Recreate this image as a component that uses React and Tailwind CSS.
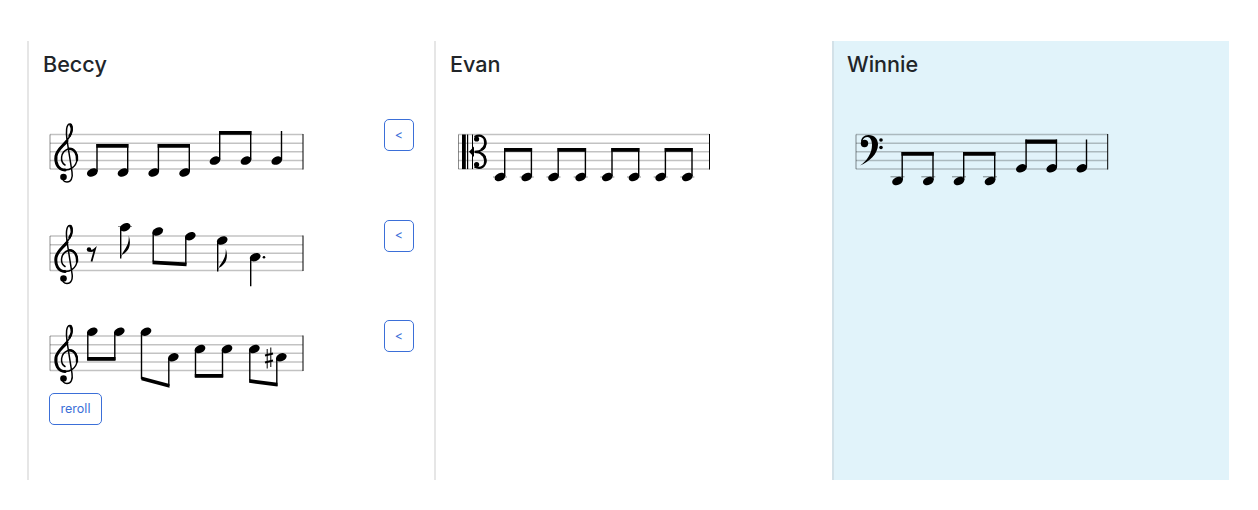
const Head = ({ x, y }) => (
  <ellipse cx={x} cy={y} rx="5.6" ry="3.9" transform={`rotate(-24 ${x} ${y})`} fill="#000" />
);

const Stem = ({ x, y1, y2 }) => <line x1={x} x2={x} y1={y1} y2={y2} stroke="#000" strokeWidth="1.4" />;

const Beam = ({ x1, y1, x2, y2, h = 3.8 }) => (
  <polygon points={`${x1},${y1} ${x2},${y2} ${x2},${y2 + h} ${x1},${y1 + h}`} fill="#000" />
);

const Ledger = ({ x, y }) => <line x1={x - 7} x2={x + 7} y1={y} y2={y} stroke="#000" strokeOpacity="0.45" strokeWidth="1" />;

function StaffLines({ left, right, top }) {
  return (
    <g>
      {[0, 1, 2, 3, 4].map((i) => (
        <line key={i} x1={left} x2={right} y1={top + i * 8.65} y2={top + i * 8.65} stroke="#000" strokeOpacity="0.24" strokeWidth="1.5" />
      ))}
      <line x1={left} x2={left} y1={top} y2={top + 34.6} stroke="#000" strokeOpacity="0.45" strokeWidth="1" />
      <line x1={right} x2={right} y1={top - 0.5} y2={top + 35} stroke="#000" strokeWidth="1" />
    </g>
  );
}

// drawn at the first staff's position, shifted with dy for the others
function TrebleClef({ dy = 0 }) {
  return (
    <g transform={`translate(0 ${dy})`} fill="none" stroke="#000" strokeLinecap="round">
      <path d="M65 165 C60 162 60 152 68 149 C75 147 78 155 77 160 C76 167 70 170 65 170 C58 170 55 163 56 156 C57 148 68 142 71 134 C73 128 72 124 70 124 C66 124 66 132 67 140 L72 172 C73 178 71 182 67 182 C64 182 62 180 63 177" strokeWidth="1.5" />
      <path d="M65 170 C58 170 55 163 56 156 C57 150 63 146 67 141" strokeWidth="3" />
      <path d="M77 160 C77.5 155 75 148.5 69 148.7" strokeWidth="2.4" />
      <path d="M70.5 125 C72.5 128 72 132 69.5 136" strokeWidth="2.4" />
      <circle cx="63.5" cy="177" r="3.3" fill="#000" stroke="none" />
    </g>
  );
}

function BassClef() {
  return (
    <g fill="#000">
      <path d="M860 165.5 C867 161 872 153 872 145 C872 140 870 137 867.5 137 C865 137 863 138.5 862.5 141 L861 142 C861 138 864 135 868.5 135 C874.5 135 878 139 878 144.5 C878 154 869 162 860 165.5 Z" />
      <circle cx="864.5" cy="143.5" r="3.7" />
      <circle cx="881" cy="140" r="1.8" />
      <circle cx="881" cy="147.5" r="1.8" />
    </g>
  );
}

function AltoClef() {
  return (
    <g>
      <rect x="462" y="134.5" width="3.8" height="34.6" fill="#000" />
      <rect x="467" y="134.5" width="1.2" height="34.6" fill="#000" />
      <polygon points="469,151.8 474,146.5 474,157" fill="#000" />
      <rect x="472" y="134.5" width="1" height="34.6" fill="#000" />
      <path d="M474.5 137 C481 133.5 486 137.5 485.5 144 C485 149.5 480 151.5 474.5 151.8 M474.5 166.6 C481 170 486 166 485.5 159.6 C485 154 480 152 474.5 151.8" fill="none" stroke="#000" strokeWidth="2.2" />
      <path d="M484.8 139.5 C486 144 484.5 148 481 150 M484.8 164 C486 159.6 484.5 155.6 481 153.6" fill="none" stroke="#000" strokeWidth="2.4" />
      <circle cx="476.6" cy="139" r="2.6" fill="#000" />
      <circle cx="476.6" cy="164.6" r="2.6" fill="#000" />
    </g>
  );
}

const Flag = ({ x, y }) => (
  <path d={`M${x} ${y} C${x + 1} ${y - 8} ${x + 9} ${y - 11} ${x + 8} ${y - 23} C${x + 11.5} ${y - 12} ${x + 7} ${y - 6} ${x} ${y - 3} Z`} fill="#000" />
);

function Sharp({ x, y }) {
  return (
    <g>
      <line x1={x - 1.8} x2={x - 1.8} y1={y - 9} y2={y + 10.5} stroke="#000" strokeWidth="1" />
      <line x1={x + 1.8} x2={x + 1.8} y1={y - 10.5} y2={y + 9} stroke="#000" strokeWidth="1" />
      <line x1={x - 4} x2={x + 4} y1={y - 2.5} y2={y - 4.5} stroke="#000" strokeWidth="2.2" />
      <line x1={x - 4} x2={x + 4} y1={y + 4.5} y2={y + 2.5} stroke="#000" strokeWidth="2.2" />
    </g>
  );
}

function StemUp({ x, y, top }) {
  return (
    <g>
      <Head x={x} y={y} />
      <Stem x={x + 4.7} y1={y - 1} y2={top} />
    </g>
  );
}

function StemDown({ x, y, bottom }) {
  return (
    <g>
      <Head x={x} y={y} />
      <Stem x={x - 4.5} y1={y + 1} y2={bottom} />
    </g>
  );
}

// viewBox uses the picture's own coordinates so notes can be placed directly
const Score = ({ x, y, w, h, children }) => (
  <svg width={w} height={h} viewBox={`${x} ${y} ${w} ${h}`} className="block shrink-0">
    {children}
  </svg>
);

function Line1() {
  return (
    <Score x={48} y={109} w={262} h={83}>
      <StaffLines left={50} right={303} top={134.5} />
      <TrebleClef />
      {[92.3, 123, 153.7, 184.6].map((x) => <StemUp key={x} x={x} y={172.5} top={144} />)}
      <Beam x1={96.4} y1={144} x2={128.4} y2={144} />
      <Beam x1={157.7} y1={144} x2={190} y2={144} />
      {[215, 246].map((x) => <StemUp key={x} x={x} y={160.6} top={131} />)}
      <Beam x1={219} y1={131} x2={251.4} y2={131} />
      <StemUp x={276.8} y={160.6} top={131} />
    </Score>
  );
}

function Line2() {
  return (
    <Score x={48} y={209.5} w={262} h={83}>
      <StaffLines left={50} right={303} top={235.5} />
      <TrebleClef dy={101} />
      {/* eighth rest */}
      <circle cx="89" cy="249" r="2.2" fill="#000" />
      <path d="M89 250 C91 251 93 250.5 95 248.5 L91.5 261" fill="none" stroke="#000" strokeWidth="1.8" />
      <Ledger x={125} y={226} />
      <StemDown x={125.2} y={226.7} bottom={258} />
      <Flag x={120.7} y={258} />
      <StemDown x={157.7} y={231} bottom={261} />
      <StemDown x={190.3} y={235.7} bottom={264} />
      <Beam x1={152.5} y1={260} x2={186.5} y2={262} />
      <StemDown x={222.2} y={240} bottom={271} />
      <Flag x={217.7} y={271} />
      <StemDown x={255.2} y={256.7} bottom={285.7} />
      <circle cx="264" cy="256.7" r="1.3" fill="#000" />
    </Score>
  );
}

function Line3() {
  return (
    <Score x={48} y={310} w={262} h={83}>
      <StaffLines left={50} right={303} top={336} />
      <TrebleClef dy={201.5} />
      <StemDown x={92.3} y={331.7} bottom={360} />
      <StemDown x={119.3} y={331.7} bottom={360} />
      <Beam x1={87.1} y1={357} x2={115.5} y2={357} />
      <StemDown x={146} y={331.7} bottom={379} />
      <StemDown x={173.3} y={357.3} bottom={386} />
      <Beam x1={141.3} y1={376.5} x2={169.5} y2={384} />
      <StemDown x={200} y={349} bottom={377} />
      <StemDown x={227} y={349} bottom={377} />
      <Beam x1={194.8} y1={374} x2={223.2} y2={374} />
      <StemDown x={254.3} y={349} bottom={380} />
      <StemDown x={281.3} y={357.3} bottom={386} />
      <Beam x1={249.1} y1={379} x2={277.5} y2={382.8} />
      <Sharp x={269} y={358} />
    </Score>
  );
}

function EvanLine() {
  const heads = [500, 526.7, 553.5, 580.7, 607.3, 634, 660.7, 687.3];
  return (
    <Score x={456} y={109} w={262} h={83}>
      <StaffLines left={458.5} right={709.5} top={134.5} />
      <AltoClef />
      {heads.map((x) => (
        <g key={x}>
          <Ledger x={x} y={177} />
          <StemUp x={x} y={177} top={148} />
        </g>
      ))}
      {[0, 2, 4, 6].map((i) => (
        <Beam key={i} x1={heads[i] + 4} y1={148} x2={heads[i + 1] + 5.4} y2={148} />
      ))}
    </Score>
  );
}

function WinnieLine() {
  const low = [897.5, 928.3, 959, 990];
  return (
    <Score x={854} y={109} w={262} h={83}>
      <StaffLines left={856} right={1107.7} top={134.5} />
      <BassClef />
      {low.map((x) => (
        <g key={x}>
          <Ledger x={x} y={176.8} />
          <StemUp x={x} y={181} top={152} />
        </g>
      ))}
      <Beam x1={901.5} y1={152} x2={933.7} y2={152} />
      <Beam x1={963} y1={152} x2={995.4} y2={152} />
      <StemUp x={1021.4} y={168.3} top={139.5} />
      <StemUp x={1051.7} y={168.3} top={139.5} />
      <Beam x1={1025.4} y1={139.5} x2={1057.1} y2={139.5} h={4.2} />
      <StemUp x={1081.8} y={168.3} top={139.5} />
    </Score>
  );
}

const btn = 'rounded-[5px] border border-[#3b6fd8] bg-white text-[#3b6fd8] text-[12.5px] leading-none';
const heading = 'h-[68px] pt-[10px] text-[21.6px] font-medium leading-[26px]';

function Row({ children, mb }) {
  return (
    <div className={`flex items-start justify-between pr-[20px] ${mb}`}>
      {children}
      <button className={`${btn} mt-[10px] h-[32px] w-[30px]`}>&lt;</button>
    </div>
  );
}

export default function App() {
  return (
    <div className="h-[510px] bg-white pl-[27px] pt-[41px] font-['Inter','Liberation_Sans',sans-serif]">
      <div className="flex h-[439px] text-[#212529]">
        <section className="w-[407px] border-l-2 border-[#e6e6e6] pl-[14px]">
          <h2 className={heading}>Beccy</h2>
          <div className="ml-[5px]">
            <Row mb="mb-[17.5px]"><Line1 /></Row>
            <Row mb="mb-[17.5px]"><Line2 /></Row>
            <Row mb="mb-0"><Line3 /></Row>
            <button className={`${btn} ml-[1px] h-[32px] w-[53px]`}>reroll</button>
          </div>
        </section>
        <section className="w-[398px] border-l-2 border-[#e6e6e6] pl-[14px]">
          <h2 className={heading}>Evan</h2>
          <div className="ml-[6px]">
            <EvanLine />
          </div>
        </section>
        <section className="w-[397px] border-l-2 border-[#d3e1e8] bg-[#e1f3fa] pl-[13px]">
          <h2 className={heading}>Winnie</h2>
          <div className="ml-[7px]">
            <WinnieLine />
          </div>
        </section>
      </div>
    </div>
  );
}
